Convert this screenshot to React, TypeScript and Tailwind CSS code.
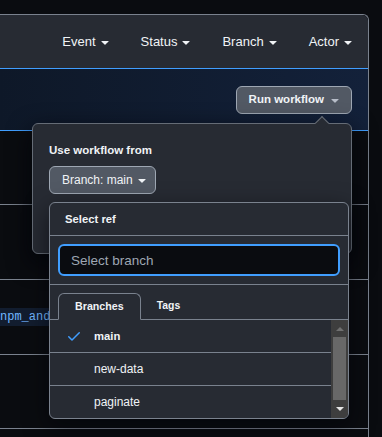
import React from 'react';

// small octicon-style caret
const Caret = ({ className }: { className?: string }) => (
  <svg viewBox="0 0 16 16" width="16" height="16" className={className} fill="currentColor">
    <path d="m4.427 7.427 3.396 3.396a.25.25 0 0 0 .354 0l3.396-3.396A.25.25 0 0 0 11.396 7H4.604a.25.25 0 0 0-.177.427Z" />
  </svg>
);

const Check = () => (
  <svg viewBox="0 0 16 16" width="16" height="16" className="text-[#409eff]" fill="currentColor">
    <path d="M13.78 4.22a.75.75 0 0 1 0 1.06l-7.25 7.25a.75.75 0 0 1-1.06 0L2.22 9.28a.751.751 0 0 1 .018-1.042.751.751 0 0 1 1.042-.018L6 10.94l6.72-6.72a.75.75 0 0 1 1.06 0Z" />
  </svg>
);

const filters = ['Event', 'Status', 'Branch', 'Actor'];
const branches = [
  { name: 'main', selected: true },
  { name: 'new-data', selected: false },
  { name: 'paginate', selected: false },
];

export default function App() {
  return (
    <div className="min-h-screen overflow-hidden bg-[#0a0c10] pt-[14px] pr-[13px] font-['Liberation_Sans',Arial,sans-serif] text-[#f0f3f6]">
      <div className="relative rounded-tr-md border-t border-r border-[#7a828e]">
        {/* filter bar */}
        <div className="flex h-[54px] items-center justify-end rounded-tr-md border-b border-[#409eff] bg-[#272b33]">
          {filters.map((f) => (
            <button key={f} className="flex items-center pl-4 pr-3 text-[13px] leading-5">
              {f}
              <Caret className="ml-px" />
            </button>
          ))}
        </div>

        {/* dispatch notice */}
        <div className="flex h-[62px] justify-end border-b border-[#409eff] bg-gradient-to-r from-[#0e1828] to-[#13213a] pt-[17px] pr-4">
          <button className="flex h-7 items-center rounded-md border border-[#9ea7b3] bg-[#525964] pl-3 pr-2 text-[11.5px] font-bold">
            Run workflow
            <Caret className="ml-[3px] text-[#b7bdc8]" />
          </button>
        </div>

        {/* run rows */}
        <div className="h-[74px] border-b border-[#7a828e]" />
        <div className="h-[75px] border-b border-[#7a828e]" />
        <div className="flex h-[75px] items-center border-b border-[#7a828e]">
          <span className="-ml-[6px] rounded-md bg-[#121d2f] py-px pl-[6px] pr-3 font-['Liberation_Mono',monospace] text-[12px] leading-4 text-[#71b7ff]">
            npm_and_
          </span>
        </div>
        <div className="h-[74px] border-b border-[#7a828e]" />
        <div className="h-[20px]" />

        {/* popover */}
        <div className="absolute left-[32px] top-[108px] h-[131px] w-[320px] rounded-md border border-[#656c76] bg-[#272b33] px-4 pt-4 shadow-[0_8px_24px_rgba(1,4,9,0.85)]">
          <div className="absolute -top-[6px] left-[284px] h-[10px] w-[10px] rotate-45 border-l border-t border-[#656c76] bg-[#272b33]" />
          <div className="text-[11.5px] font-bold leading-5">Use workflow from</div>
          <button className="mt-[6px] flex h-7 w-[107px] items-center rounded-md border border-[#9ea7b3] bg-[#525964] pl-3 text-[12px]">
            Branch: main
            <Caret className="ml-px" />
          </button>

          {/* ref picker */}
          <div className="absolute left-4 top-[78px] flex h-[217px] w-[300px] flex-col overflow-hidden rounded-md border border-[#7a828e] bg-[#272b33] shadow-[0_8px_24px_rgba(1,4,9,0.6)]">
            <div className="flex h-[33px] shrink-0 items-center border-b border-[#7a828e] pl-[15px] text-[11.3px] font-bold">
              Select ref
            </div>
            <div className="h-[49px] shrink-0 border-b border-[#7a828e] p-2">
              <input
                readOnly
                placeholder="Select branch"
                className="h-8 w-full rounded-md border-2 border-[#409eff] bg-[#0a0c10] pl-[11px] text-[13.5px] text-[#f0f3f6] outline-none placeholder:text-[#9ea7b3]"
              />
            </div>
            <div className="flex h-[35px] shrink-0 items-end border-b border-[#7a828e] pl-2">
              <div className="-mb-px flex h-[27px] items-center rounded-t-md border border-[#7a828e] border-b-[#272b33] bg-[#272b33] px-4 text-[10.7px] font-bold">
                Branches
              </div>
              <div className="flex h-[27px] items-center px-4 text-[10.4px] font-bold">Tags</div>
            </div>
            <div className="flex min-h-0 flex-1">
              <div className="flex-1">
                {branches.map((b) => (
                  <div key={b.name} className="flex h-[33px] items-center border-b border-[#7a828e] pl-4">
                    <span className="w-4">{b.selected && <Check />}</span>
                    <span className={`ml-3 ${b.selected ? 'text-[11.3px] font-bold' : 'text-[12px]'}`}>{b.name}</span>
                  </div>
                ))}
              </div>
              {/* scrollbar */}
              <div className="flex w-[17px] flex-col items-center bg-[#3e3e3e]">
                <div className="flex h-[17px] items-center justify-center">
                  <div className="h-0 w-0 border-x-[4px] border-b-[4px] border-x-transparent border-b-[#707070]" />
                </div>
                <div className="h-[63px] w-[13px] bg-[#686868]" />
                <div className="flex h-[17px] items-center justify-center">
                  <div className="h-0 w-0 border-x-[4px] border-t-[4px] border-x-transparent border-t-[#e6e6e6]" />
                </div>
              </div>
            </div>
          </div>
        </div>
      </div>
    </div>
  );
}
